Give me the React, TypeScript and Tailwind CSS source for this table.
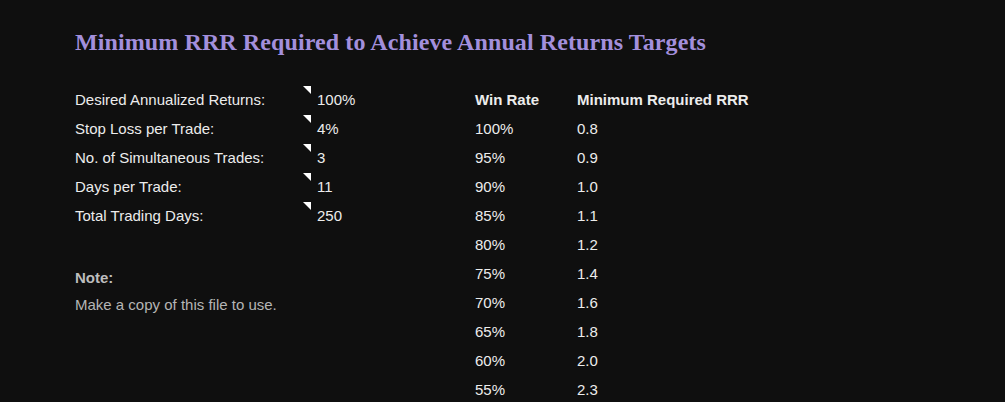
import React from "react";

const inputs = [
  ["Desired Annualized Returns:", "100%"],
  ["Stop Loss per Trade:", "4%"],
  ["No. of Simultaneous Trades:", "3"],
  ["Days per Trade:", "11"],
  ["Total Trading Days:", "250"],
];

const table = [
  ["100%", "0.8"],
  ["95%", "0.9"],
  ["90%", "1.0"],
  ["85%", "1.1"],
  ["80%", "1.2"],
  ["75%", "1.4"],
  ["70%", "1.6"],
  ["65%", "1.8"],
  ["60%", "2.0"],
  ["55%", "2.3"],
];

export default function App() {
  return (
    <div className="w-[1005px] h-[402px] overflow-hidden bg-[#0f0f0f] pl-[75px] pt-[27px] font-['Liberation_Sans',Arial,sans-serif] text-[15px] text-[#ececec]">
      <h1 className="font-['Liberation_Serif',serif] font-bold text-[24px] tracking-[0.1px] leading-[30px] text-[#a38fdc]">
        Minimum RRR Required to Achieve Annual Returns Targets
      </h1>
      <div className="flex mt-[29px]">
        <div className="w-[400px] flex flex-col">
          {inputs.map(([l, v]) => (
            <div key={l} className="h-[29px] flex items-center">
              <div className="w-[242px]">{l}</div>
              <div className="relative">
                <span className="absolute left-[-14px] top-[-3px] w-0 h-0 border-t-[8px] border-t-white border-l-[8px] border-l-transparent" />
                {v}
              </div>
            </div>
          ))}
          <div className="h-[29px]" />
          <div className="h-[29px] flex items-end font-bold text-[#bdbdbd] pt-[3px]">Note:</div>
          <div className="h-[29px] flex items-center text-[#b5b5b5] pt-[4px]">Make a copy of this file to use.</div>
        </div>
        <div className="flex flex-col">
          <div className="h-[29px] flex items-center font-bold">
            <div className="w-[102px]">Win Rate</div>
            <div>Minimum Required RRR</div>
          </div>
          {table.map(([w, r]) => (
            <div key={w} className="h-[29px] flex items-center">
              <div className="w-[102px]">{w}</div>
              <div>{r}</div>
            </div>
          ))}
        </div>
      </div>
    </div>
  );
}
